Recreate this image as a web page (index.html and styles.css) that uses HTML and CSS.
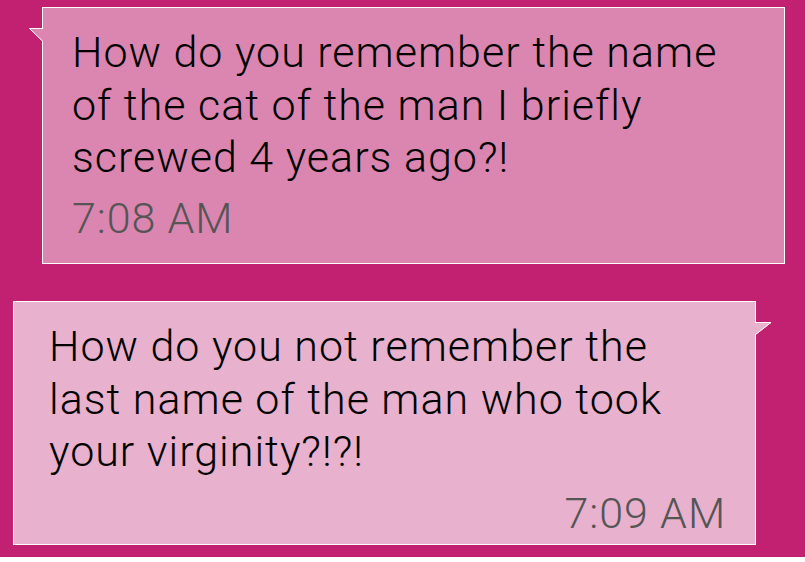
FILE: index.html
```html
<!DOCTYPE html>
<html lang="en">
<head>
    <meta charset="UTF-8" />
    <meta name="viewport" content="width=device-width, initial-scale=1.0" />
    <title>Messages</title>
    <link rel="stylesheet" href="styles.css">
</head>
<body>
    <div class="screen">
        <div class="bubble incoming">
            <svg class="tail" width="15" height="15" viewBox="0 0 15 15">
                <polygon points="0,0.5 15,0.5 15,15" fill="#db86b0"/>
                <polyline points="14,0.5 0.5,0.5 14,13.5" fill="none" stroke="#ffffff" stroke-width="1"/>
            </svg>
            <p class="text">How do you remember the name<br>of the cat of the man I briefly<br>screwed 4 years ago?!</p>
            <p class="time">7:08 AM</p>
        </div>
        <div class="bubble outgoing">
            <svg class="tail" width="18" height="15" viewBox="0 0 18 15">
                <polygon points="0,0.5 17.5,0.5 0,14" fill="#e8b1cd"/>
                <polyline points="1,0.5 17,0.5 1,13" fill="none" stroke="#ffffff" stroke-width="1"/>
            </svg>
            <p class="text">How do you not remember the<br>last name of the man who took<br>your virginity?!?!</p>
            <p class="time">7:09 AM</p>
        </div>
    </div>
</body>
</html>
```

FILE: styles.css
```css
html {
    background: #ffffff;
}
body {
    margin: 0;
    font-family: Roboto, "Noto Sans", sans-serif;
}
.screen {
    height: 557px;
    padding-top: 7px;
    box-sizing: border-box;
    background: #c12170;
    display: flex;
    flex-direction: column;
    gap: 37px;
    overflow: hidden;
}
.bubble {
    position: relative;
    width: 743px;
    box-sizing: border-box;
    border: 1px solid #ffffff;
}
.incoming {
    margin-left: 42px;
    padding: 18px 20px 18.5px 29px;
    background: #db86b0;
}
.outgoing {
    margin-left: 13px;
    padding: 18px 29px 4.5px 35px;
    background: #e8b1cd;
}
.text, .time {
    margin: 0;
    font-size: 43px;
    font-weight: 300;
    line-height: 52.5px;
    white-space: nowrap;
}
.text {
    color: #000000;
    letter-spacing: 1px;
}
.time {
    color: #555555;
    margin-top: 8.5px;
    letter-spacing: 0.9px;
}
.outgoing .time {
    text-align: right;
    margin-top: 9.5px;
}
.tail {
    position: absolute;
    display: block;
}
.incoming .tail {
    left: -14px;
    top: 20px;
}
.outgoing .tail {
    right: -17px;
    top: 20px;
}
```
